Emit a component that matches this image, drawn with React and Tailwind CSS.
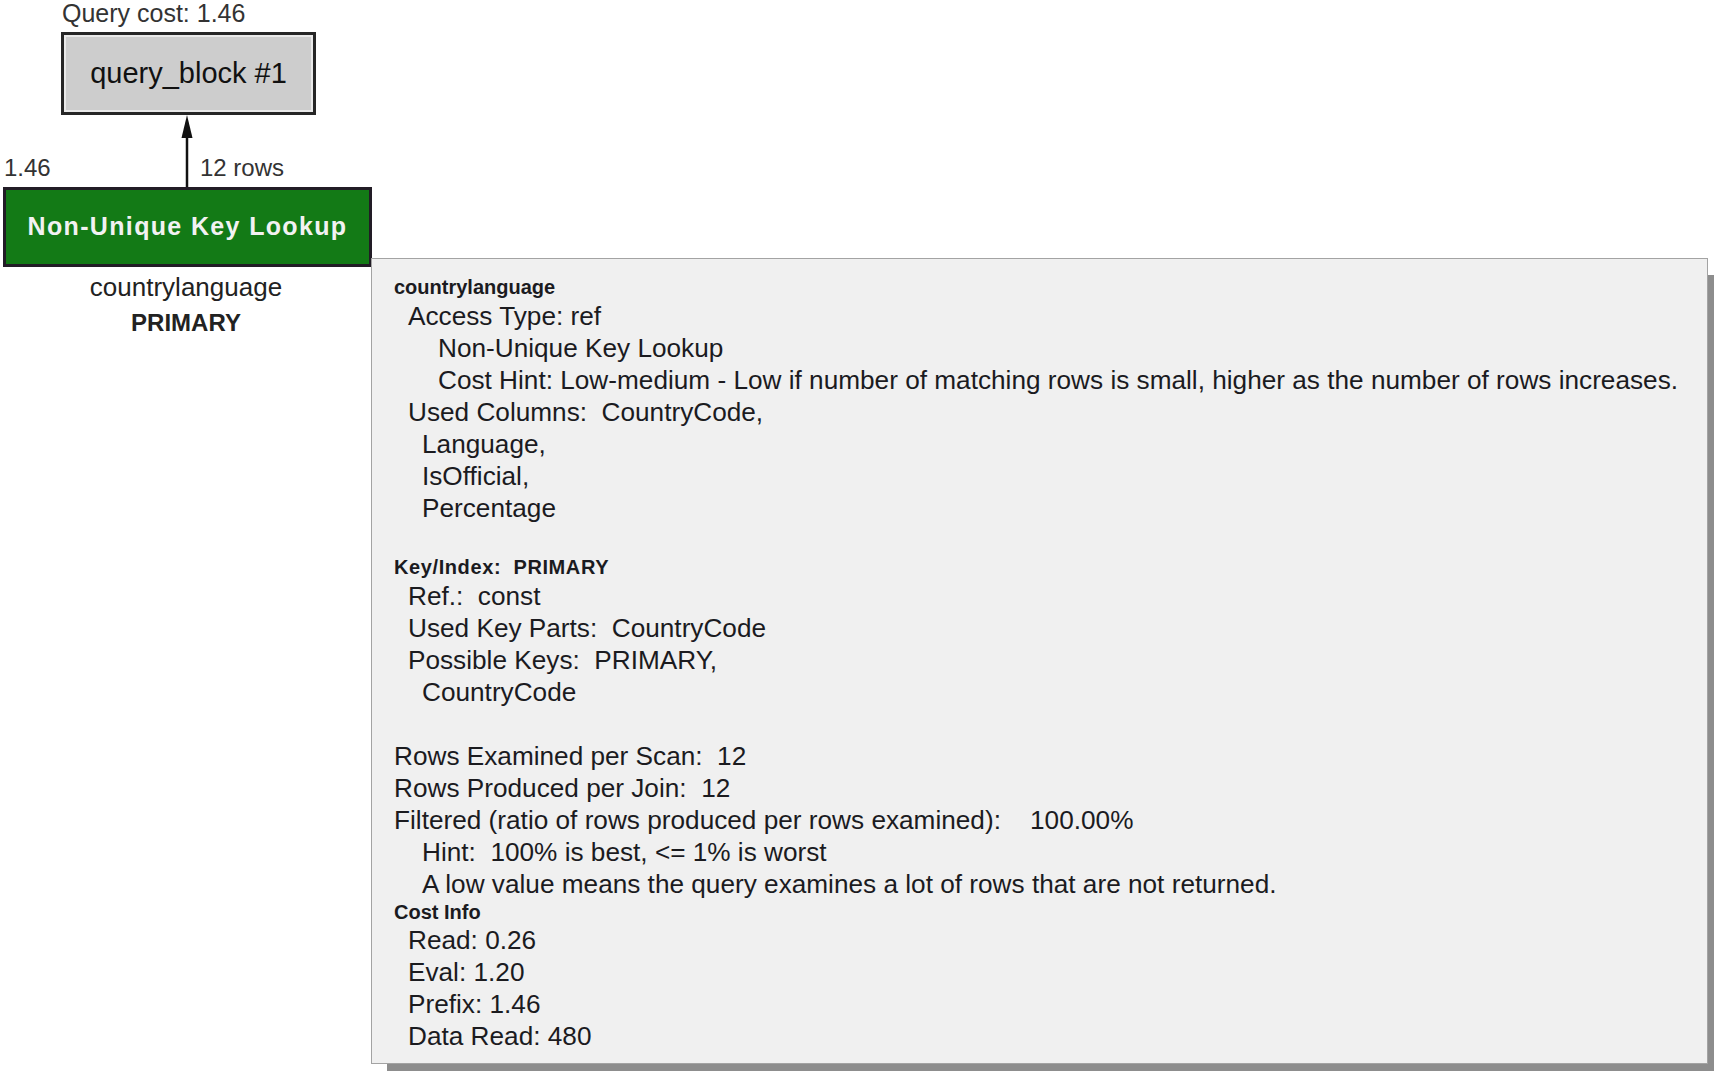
const indent = {
  0: "pl-0",
  1: "pl-[14px]",
  2: "pl-[28px]",
  3: "pl-[44px]",
};

const lines = [
  { head: "countrylanguage", h: "h-[26px] leading-[26px]" },
  { text: "Access Type: ref", i: 1 },
  { text: "Non-Unique Key Lookup", i: 3 },
  {
    text: "Cost Hint: Low-medium - Low if number of matching rows is small, higher as the number of rows increases.",
    i: 3,
  },
  { text: "Used Columns:  CountryCode,", i: 1 },
  { text: "Language,", i: 2 },
  { text: "IsOfficial,", i: 2 },
  { text: "Percentage", i: 2 },
  { gap: "h-[30px]" },
  { head: "Key/Index:  PRIMARY", h: "h-[26px] leading-[26px] tracking-[0.6px]" },
  { text: "Ref.:  const", i: 1 },
  { text: "Used Key Parts:  CountryCode", i: 1 },
  { text: "Possible Keys:  PRIMARY,", i: 1 },
  { text: "CountryCode", i: 2 },
  { gap: "h-[32px]" },
  { text: "Rows Examined per Scan:  12", i: 0 },
  { text: "Rows Produced per Join:  12", i: 0 },
  { text: "Filtered (ratio of rows produced per rows examined):    100.00%", i: 0 },
  { text: "Hint:  100% is best, <= 1% is worst", i: 2 },
  { text: "A low value means the query examines a lot of rows that are not returned.", i: 2 },
  { head: "Cost Info", h: "h-[24px] leading-[24px]" },
  { text: "Read: 0.26", i: 1 },
  { text: "Eval: 1.20", i: 1 },
  { text: "Prefix: 1.46", i: 1 },
  { text: "Data Read: 480", i: 1 },
];

function ArrowUp() {
  return (
    <svg width="12" height="72" viewBox="0 0 12 72" className="block">
      <line x1="6" y1="18" x2="6" y2="72" stroke="#111" strokeWidth="2.5" />
      <polygon points="6,0 0.5,23 11.5,23" fill="#111" />
    </svg>
  );
}

function Tooltip() {
  return (
    <div className="absolute left-[371px] top-[258px] w-[1337px] border border-[#a3a3a3] bg-[#f0f0f0] pb-[11px] pl-[22px] pt-[15px] text-[#1b1b1f] shadow-[11px_12px_0_-5px_#8d8d8d]">
      {lines.map((l, idx) => {
        if (l.gap) return <div key={idx} className={l.gap} />;
        if (l.head)
          return (
            <div key={idx} className={`${l.h} whitespace-pre text-[20px] font-bold`}>
              {l.head}
            </div>
          );
        return (
          <div
            key={idx}
            className={`h-[32px] whitespace-pre text-[26.2px] leading-[32px] ${indent[l.i]}`}
          >
            {l.text}
          </div>
        );
      })}
    </div>
  );
}

export default function App() {
  return (
    <div className="relative h-[1081px] w-full overflow-hidden bg-white font-['Liberation_Sans',Arial,sans-serif] text-[#222]">
      <div className="flex w-[372px] flex-col">
        <div className="ml-[62px] h-[32px] text-[25px] leading-[26px] text-[#333]">
          Query cost: 1.46
        </div>
        <div className="ml-[61px] w-[255px] border-[3px] border-[#262626] bg-[#e9e9e9] p-[2px]">
          <div className="flex h-[73px] items-center justify-center bg-[#cdcdcd] text-[29px] text-[#111]">
            query_block #1
          </div>
        </div>
        <div className="flex h-[72px]">
          <div className="flex w-[181px] items-end pb-[7px] pl-[4px] text-[24px] leading-[24px] text-[#333]">
            1.46
          </div>
          <ArrowUp />
          <div className="flex items-end pb-[7px] pl-[7px] text-[24px] leading-[24px] text-[#333]">
            12 rows
          </div>
        </div>
        <div className="ml-[3px] flex h-[80px] w-[369px] items-center justify-center border-[3px] border-[#221c26] bg-[#137a16] text-[25px] font-bold tracking-[1.35px] text-[#f2f2f2]">
          Non-Unique Key Lookup
        </div>
        <div className="mt-[3px] text-center text-[26px] leading-[35px] text-[#222]">
          countrylanguage
        </div>
        <div className="text-center text-[24px] font-bold leading-[35px] text-[#222]">
          PRIMARY
        </div>
      </div>
      <Tooltip />
    </div>
  );
}
